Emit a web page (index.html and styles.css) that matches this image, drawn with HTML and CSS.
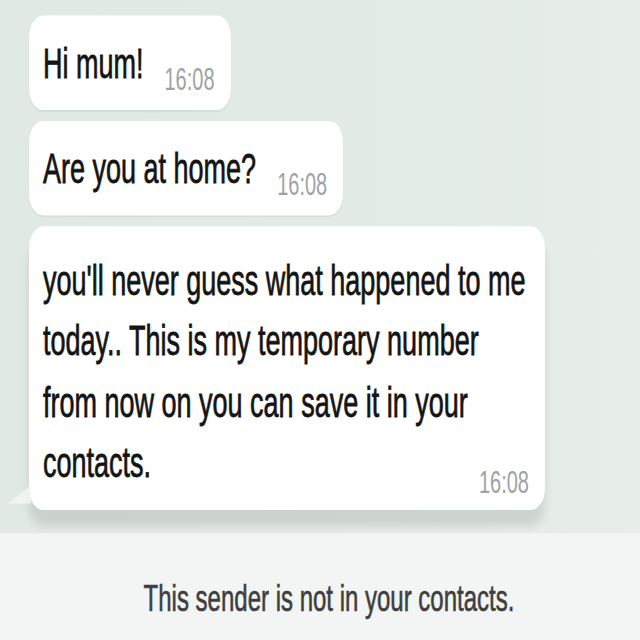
FILE: index.html
```html
<!DOCTYPE html>
<html lang="en">
<head>
<meta charset="utf-8">
<title>Chat</title>
<link rel="stylesheet" href="styles.css">
</head>
<body>
<div class="screen">
  <div class="chat">
    <div class="bubble">
      <span class="msg">Hi mum!</span>
      <span class="time">16:08</span>
    </div>
    <div class="bubble">
      <span class="msg">Are you at home?</span>
      <span class="time">16:08</span>
    </div>
    <div class="bubble bubble-long">
      <p class="msg-block">you'll never guess what happened to me<br>today.. This is my temporary number<br>from now on you can save it in your<br>contacts.<span class="time time-float">16:08</span></p>
    </div>
  </div>
  <div class="banner">
    <p class="banner-text">This sender is not in your contacts.</p>
  </div>
</div>
</body>
</html>
```
FILE: styles.css
```css
html, body {
  margin: 0;
  padding: 0;
  width: 640px;
  height: 640px;
  overflow: hidden;
  background: #e2eae5;
}

.screen {
  width: 640px;
  height: 413px;
  display: flex;
  flex-direction: column;
  transform: scaleY(1.55);
  transform-origin: top left;
  font-family: "Liberation Sans", Arial, sans-serif;
  color: #141414;
}

.chat {
  height: 344px;
  box-sizing: border-box;
  padding: 10px 0 0 29px;
  display: flex;
  flex-direction: column;
  align-items: flex-start;
  gap: 6.5px;
  background: linear-gradient(90deg, #e1e9e4 0%, #e3ebe6 70%, #e7eee9 100%);
}

.bubble {
  position: relative;
  display: flex;
  align-items: flex-end;
  background: #ffffff;
  border-radius: 14px;
  padding: 12px 16px 10px 14px;
  box-shadow: 0 1px 1px rgba(0, 0, 0, 0.06);
}

.msg {
  font-size: 27px;
  line-height: 39.4px;
  white-space: nowrap;
  -webkit-text-stroke: 0.5px #141414;
}

.time {
  font-size: 20px;
  line-height: 20px;
  color: #a0a3a2;
  margin-left: 21px;
  white-space: nowrap;
  -webkit-text-stroke: 0;
}

.bubble-long {
  display: block;
  width: 516px;
  box-sizing: border-box;
  padding: 16px 16px 8px 14px;
  box-shadow: 0 10px 7px rgba(0, 0, 0, 0.1);
}

.bubble-long::before {
  content: "";
  position: absolute;
  left: -22px;
  bottom: 4px;
  width: 24px;
  height: 12px;
  background: #f4f6f5;
  clip-path: polygon(0 100%, 100% 0, 100% 100%);
  opacity: 0.8;
}

.msg-block {
  margin: 0;
  font-size: 27px;
  line-height: 39.4px;
  white-space: nowrap;
  -webkit-text-stroke: 0.5px #141414;
}

.time-float {
  float: right;
  margin-top: 21px;
  margin-left: 0;
}

.banner {
  flex: 1;
  display: flex;
  align-items: center;
  justify-content: center;
  padding: 15px 0 0 18px;
  box-sizing: border-box;
  background: #f3f4f4;
}

.banner-text {
  margin: 0;
  font-size: 24px;
  color: #3e3e3e;
  -webkit-text-stroke: 0.4px #3e3e3e;
}
```
